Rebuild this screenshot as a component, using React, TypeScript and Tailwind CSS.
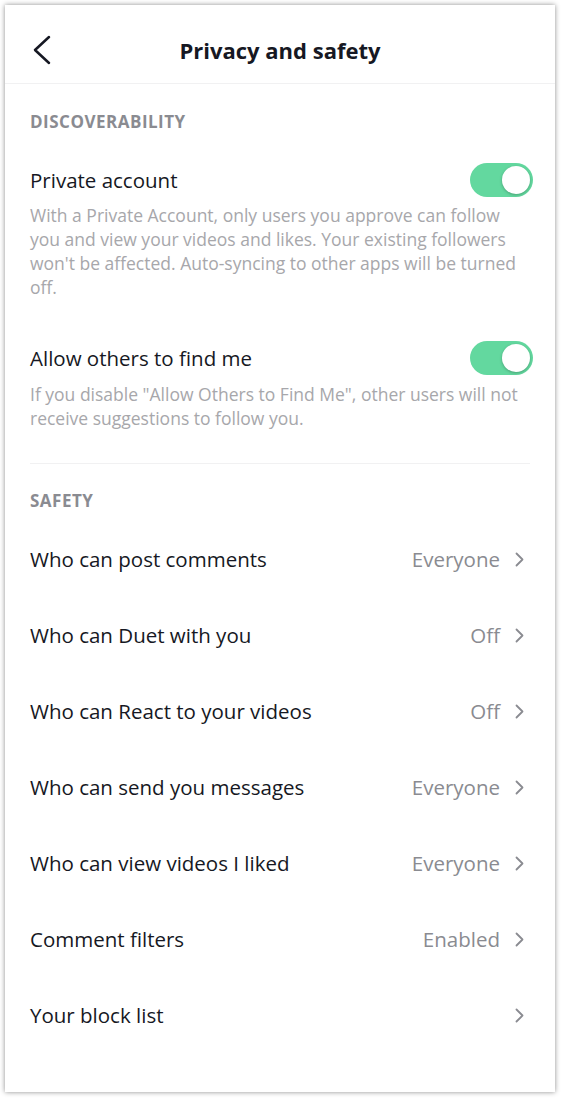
const rows = [
  { label: "Who can post comments", value: "Everyone" },
  { label: "Who can Duet with you", value: "Off" },
  { label: "Who can React to your videos", value: "Off" },
  { label: "Who can send you messages", value: "Everyone" },
  { label: "Who can view videos I liked", value: "Everyone" },
  { label: "Comment filters", value: "Enabled" },
  { label: "Your block list", value: "" },
];

function Toggle() {
  return (
    <div className="flex h-[34px] w-[63px] shrink-0 items-center justify-end rounded-full bg-[#63d89f] p-[3px]">
      <div className="h-[28px] w-[28px] rounded-full bg-white shadow-[0_1px_3px_rgba(0,0,0,0.25)]" />
    </div>
  );
}

export default function App() {
  return (
    <div className="min-h-[1104px] bg-white p-[5px] pb-[12px] font-['Open_Sans',sans-serif] text-[#161823]">
      <div className="h-[1087px] w-[550px] bg-white shadow-[0_0_5px_rgba(0,0,0,0.45)]">
        <header className="relative flex h-[79px] items-center justify-center border-b border-[#f1f1f2] pt-[12px]">
          <svg className="absolute left-[27px] top-[30px]" width="20" height="30" viewBox="0 0 20 30" fill="none">
            <polyline points="17,2 3,15 17,28" stroke="#161823" strokeWidth="2.5" strokeLinecap="round" strokeLinejoin="round" />
          </svg>
          <h1 className="text-[22px] font-bold">Privacy and safety</h1>
        </header>

        <section className="px-[22px]">
          <h2 className="pl-[3px] pt-[26px] text-[17px] font-bold leading-[23px] tracking-[0.5px] text-[#8a8b91]">DISCOVERABILITY</h2>

          <div className="mt-[30px] flex items-center justify-between pl-[3px]">
            <span className="text-[20.5px]">Private account</span>
            <Toggle />
          </div>
          <p className="mt-[6px] pl-[3px] text-[17.5px] leading-[24px] text-[#a7a7ab]">
            With a Private Account, only users you approve can follow you and view your videos and likes. Your existing followers won't be affected. Auto-syncing to other apps will be turned off.
          </p>

          <div className="mt-[42px] flex items-center justify-between pl-[3px]">
            <span className="text-[20.5px]">Allow others to find me</span>
            <Toggle />
          </div>
          <p className="mt-[7px] pl-[3px] text-[17.5px] leading-[24px] text-[#a7a7ab]">
            If you disable "Allow Others to Find Me", other users will not receive suggestions to follow you.
          </p>

          <div className="mx-[3px] mt-[33px] border-t border-[#f1f1f2]" />

          <h2 className="pl-[3px] pt-[25px] text-[17px] font-bold leading-[23px] tracking-[0.5px] text-[#8a8b91]">SAFETY</h2>

          <ul className="mt-[9px] pl-[3px]">
            {rows.map((r) => (
              <li key={r.label} className="flex h-[76px] items-center justify-between">
                <span className="text-[20.5px]">{r.label}</span>
                <span className="flex items-center gap-[15px] pr-[9px] text-[20.5px] text-[#8a8b91]">
                  {r.value}
                  <svg width="9" height="15" viewBox="0 0 9 15" fill="none">
                    <polyline points="1.5,1.5 7.5,7.5 1.5,13.5" stroke="#8a8b91" strokeWidth="1.8" strokeLinecap="round" strokeLinejoin="round" />
                  </svg>
                </span>
              </li>
            ))}
          </ul>
        </section>
      </div>
    </div>
  );
}
